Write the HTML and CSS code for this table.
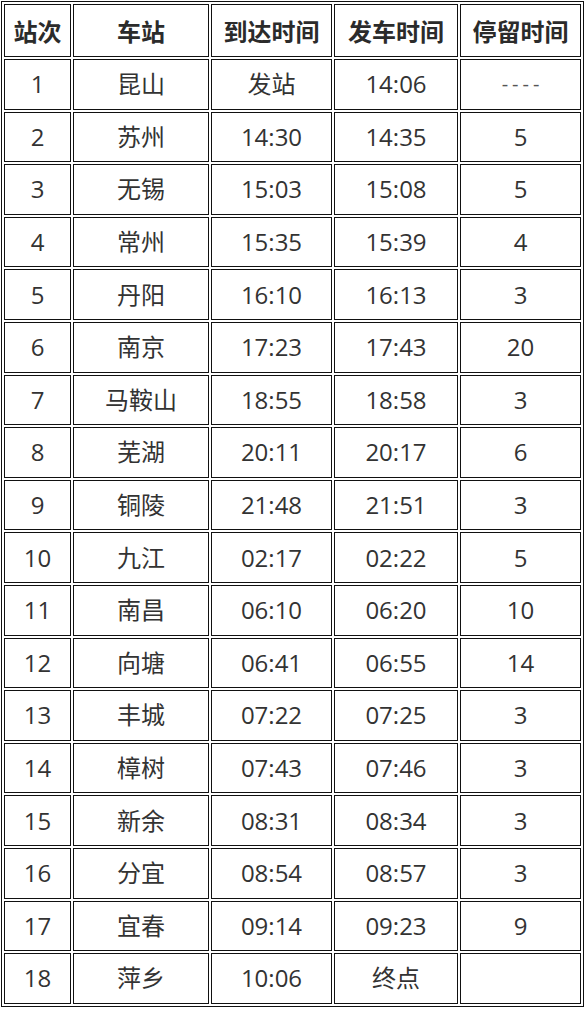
FILE: index.html
```html
<!DOCTYPE html>
<html lang="zh-CN">
<head>
<meta charset="utf-8">
<title>列车时刻表</title>
<link rel="stylesheet" href="styles.css">
</head>
<body>
<table class="timetable">
  <colgroup>
    <col class="c-no"><col class="c-station"><col class="c-arr"><col class="c-dep"><col class="c-stop">
  </colgroup>
  <thead>
    <tr><th>站次</th><th>车站</th><th>到达时间</th><th>发车时间</th><th>停留时间</th></tr>
  </thead>
  <tbody>
    <tr><td>1</td><td>昆山</td><td>发站</td><td>14:06</td><td class="dash">----</td></tr>
    <tr><td>2</td><td>苏州</td><td>14:30</td><td>14:35</td><td>5</td></tr>
    <tr><td>3</td><td>无锡</td><td>15:03</td><td>15:08</td><td>5</td></tr>
    <tr><td>4</td><td>常州</td><td>15:35</td><td>15:39</td><td>4</td></tr>
    <tr><td>5</td><td>丹阳</td><td>16:10</td><td>16:13</td><td>3</td></tr>
    <tr><td>6</td><td>南京</td><td>17:23</td><td>17:43</td><td>20</td></tr>
    <tr><td>7</td><td>马鞍山</td><td>18:55</td><td>18:58</td><td>3</td></tr>
    <tr><td>8</td><td>芜湖</td><td>20:11</td><td>20:17</td><td>6</td></tr>
    <tr><td>9</td><td>铜陵</td><td>21:48</td><td>21:51</td><td>3</td></tr>
    <tr><td>10</td><td>九江</td><td>02:17</td><td>02:22</td><td>5</td></tr>
    <tr><td>11</td><td>南昌</td><td>06:10</td><td>06:20</td><td>10</td></tr>
    <tr><td>12</td><td>向塘</td><td>06:41</td><td>06:55</td><td>14</td></tr>
    <tr><td>13</td><td>丰城</td><td>07:22</td><td>07:25</td><td>3</td></tr>
    <tr><td>14</td><td>樟树</td><td>07:43</td><td>07:46</td><td>3</td></tr>
    <tr><td>15</td><td>新余</td><td>08:31</td><td>08:34</td><td>3</td></tr>
    <tr><td>16</td><td>分宜</td><td>08:54</td><td>08:57</td><td>3</td></tr>
    <tr><td>17</td><td>宜春</td><td>09:14</td><td>09:23</td><td>9</td></tr>
    <tr><td>18</td><td>萍乡</td><td>10:06</td><td>终点</td><td></td></tr>
  </tbody>
</table>
</body>
</html>
```
FILE: styles.css
```css
html, body {
  margin: 0;
  padding: 0;
  background: #fff;
}
body {
  padding: 1px;
}
.timetable {
  border: 1px solid #111;
  border-collapse: separate;
  border-spacing: 2px;
  table-layout: fixed;
  width: 583px;
  font-family: "Open Sans", "Noto Sans CJK SC", sans-serif;
  font-size: 24px;
  color: #333;
}
.c-no { width: 67px; }
.c-station { width: 136px; }
.c-arr { width: 121px; }
.c-dep { width: 124px; }
.c-stop { width: 121px; }
.timetable th,
.timetable td {
  border: 1px solid #111;
  box-sizing: border-box;
  padding: 0;
  text-align: center;
  vertical-align: middle;
  line-height: 1;
}
.timetable th {
  height: 53px;
  font-weight: 700;
  color: #2b2b2b;
  font-family: "Noto Sans CJK SC", sans-serif;
}
.timetable td {
  height: 50.6px;
  font-weight: 400;
}
.timetable td.dash {
  font-size: 20px;
  letter-spacing: 4px;
  text-indent: 4px;
  color: #555;
}
```
